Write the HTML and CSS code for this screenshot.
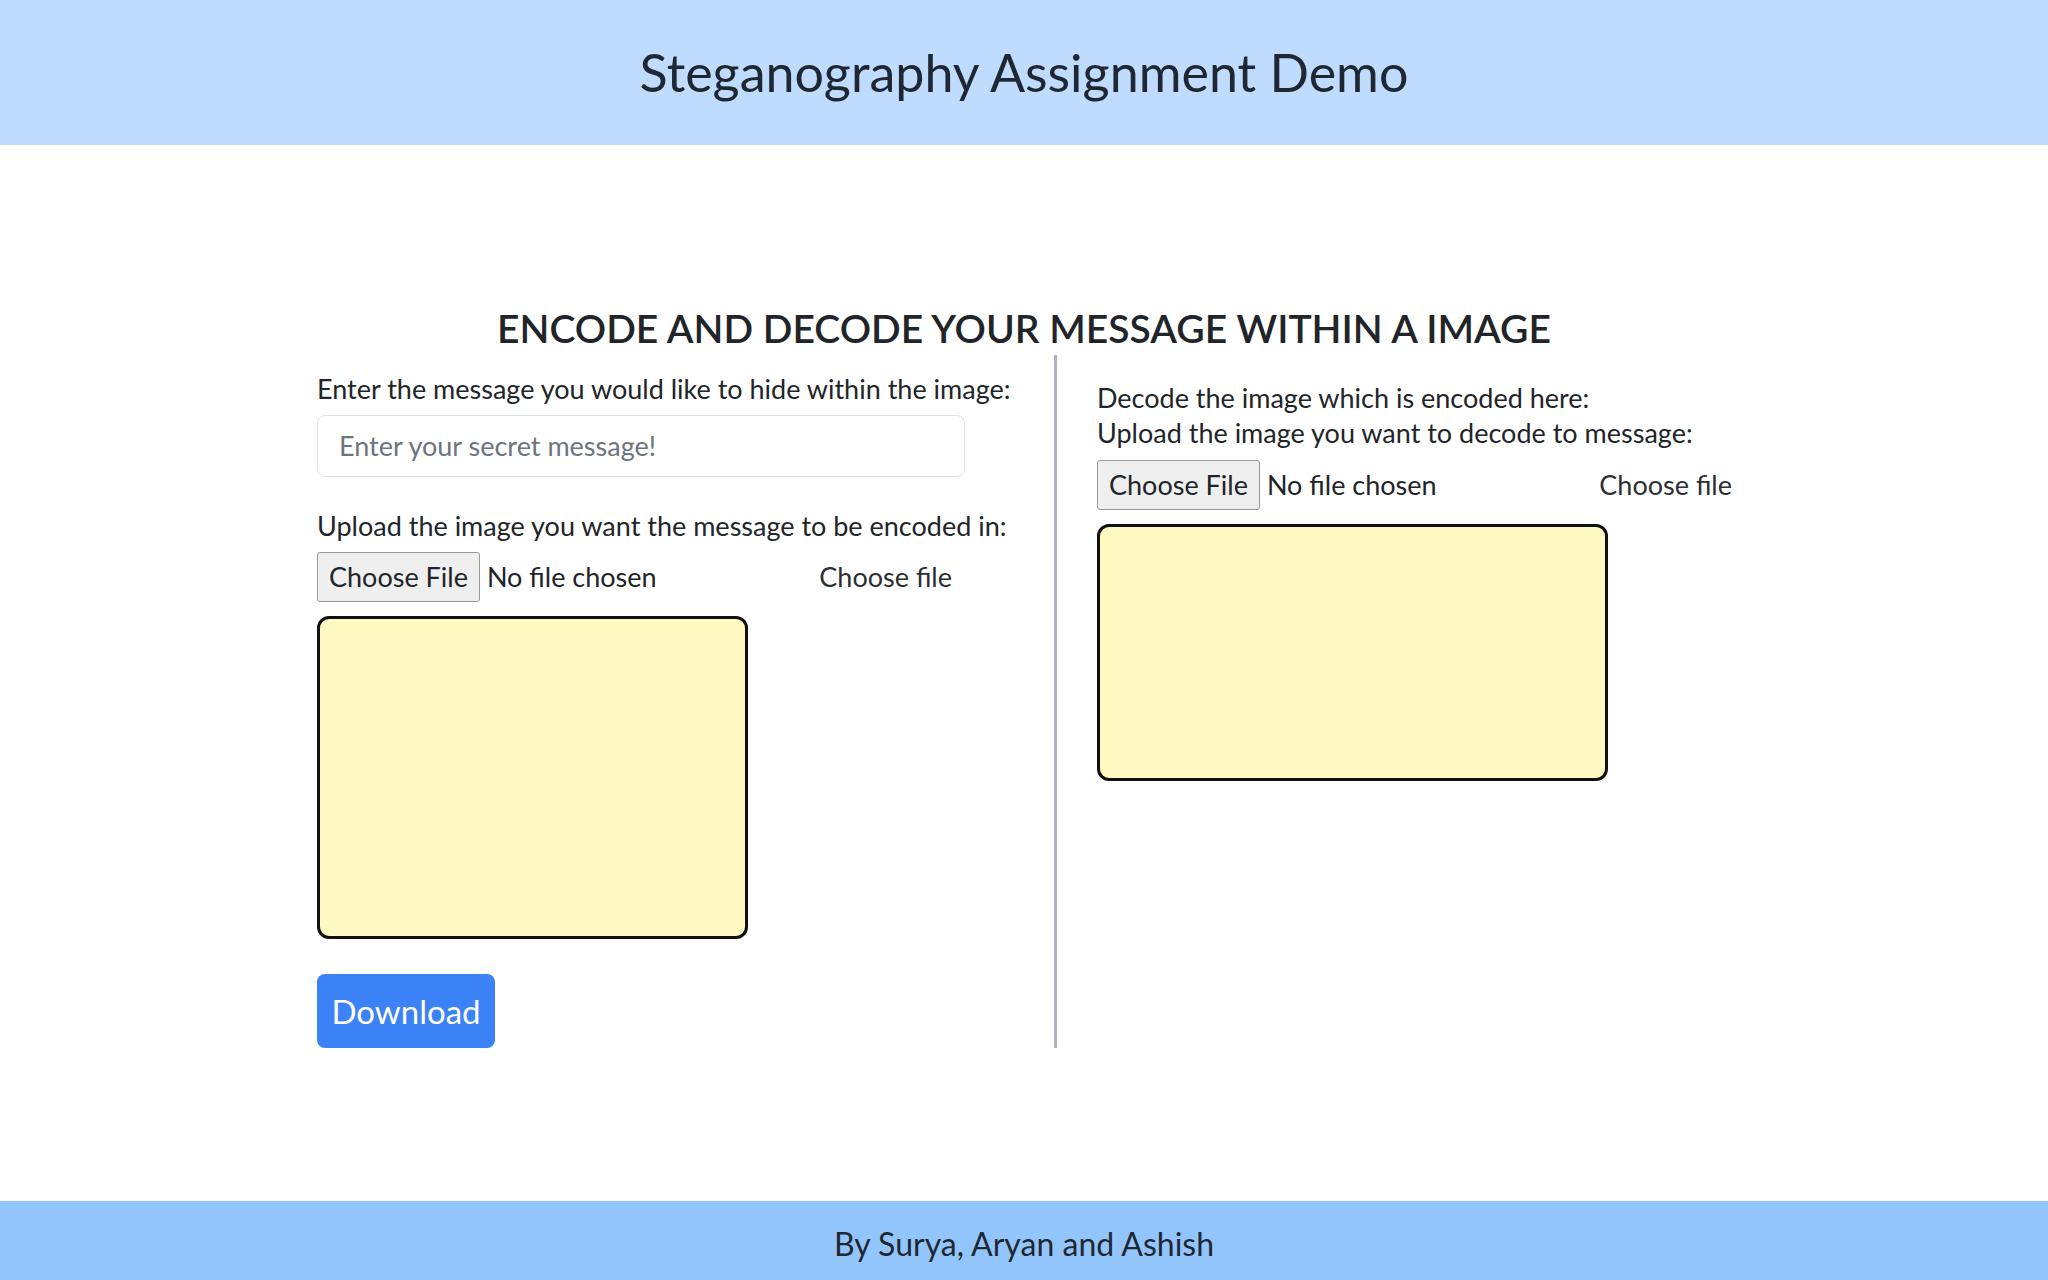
FILE: index.html
```html
<!DOCTYPE html>
<html lang="en">
<head>
    <meta charset="UTF-8">
    <meta name="viewport" content="width=device-width, initial-scale=1.0">
    <title>Steganography Assignment Demo</title>
    <link rel="stylesheet" href="styles.css">
</head>
<body>
    <div class="page">
        <!-- Header -->
        <header class="topbar">
            <h1>Steganography Assignment Demo</h1>
        </header>

        <!-- Main Content -->
        <main class="content">
            <h2 class="heading">ENCODE AND DECODE YOUR MESSAGE WITHIN A IMAGE</h2>

            <div class="panels">
                <!-- Encode -->
                <section class="panel encode">
                    <p class="text">Enter the message you would like to hide within the image:</p>
                    <input type="text" class="msg-input" id="secret" placeholder="Enter your secret message!">

                    <p class="text upload-label">Upload the image you want the message to be encoded in:</p>
                    <div class="file-row">
                        <label class="file-btn" for="encode-file">Choose File</label>
                        <span class="file-name">No file chosen</span>
                        <span class="file-hint">Choose file</span>
                        <input type="file" id="encode-file" class="file-input" accept="image/*">
                    </div>

                    <div class="preview preview-encode"></div>

                    <button class="download-btn">Download</button>
                </section>

                <!-- Decode -->
                <section class="panel decode">
                    <p class="text">Decode the image which is encoded here:</p>
                    <p class="text">Upload the image you want to decode to message:</p>
                    <div class="file-row">
                        <label class="file-btn" for="decode-file">Choose File</label>
                        <span class="file-name">No file chosen</span>
                        <span class="file-hint">Choose file</span>
                        <input type="file" id="decode-file" class="file-input" accept="image/*">
                    </div>

                    <div class="preview preview-decode"></div>
                </section>
            </div>
        </main>

        <!-- Footer -->
        <footer class="footer">
            <p>By Surya, Aryan and Ashish</p>
        </footer>
    </div>
</body>
</html>
```

FILE: styles.css
```css
* {
    margin: 0;
    padding: 0;
    box-sizing: border-box;
}

body {
    font-family: Lato, "Segoe UI", "Open Sans", sans-serif;
    color: #212529;
    background: #fff;
}

.page {
    display: flex;
    flex-direction: column;
    min-height: 100vh;
}

/* Header */
.topbar {
    height: 145px;
    background: #bfdbfe;
    display: flex;
    align-items: center;
    justify-content: center;
}

.topbar h1 {
    font-size: 52px;
    font-weight: 400;
    line-height: 1.2;
    color: #1f2733;
}

/* Main Content */
.content {
    flex: 1;
    width: 1414px;
    margin: 0 auto;
    padding-top: 160px;
}

.heading {
    text-align: center;
    font-size: 39px;
    font-weight: 600;
    line-height: 1.2;
    margin-bottom: 3px;
}

.panels {
    display: flex;
}

.panel {
    display: flex;
    flex-direction: column;
    align-items: flex-start;
}

.encode {
    flex: 0 0 740px;
    padding-top: 16px;
    border-right: 3px solid #aeb2c0;
}

.decode {
    flex: 1;
    min-width: 0;
    padding-top: 25px;
    padding-left: 40px;
}

.text {
    font-size: 27px;
    line-height: 35px;
}

.upload-label {
    margin-top: 31px;
}

.msg-input {
    width: 648px;
    height: 62px;
    margin-top: 9px;
    padding: 0 21px;
    border: 1px solid #dee2e6;
    border-radius: 8px;
    font-family: inherit;
    font-size: 27px;
    color: #212529;
}

.msg-input::placeholder {
    color: #6c757d;
}

/* File picker */
.file-row {
    width: 648px;
    display: flex;
    align-items: center;
    margin-top: 9px;
    font-size: 27px;
}

.decode .file-row {
    margin-top: 10px;
}

.file-btn {
    height: 50px;
    padding: 0 11px;
    display: flex;
    align-items: center;
    background: #efefef;
    border: 1px solid #9a9a9a;
    border-radius: 3px;
    cursor: pointer;
}

.file-name {
    margin-left: 7px;
}

.file-hint {
    margin-left: auto;
    padding-right: 13px;
    color: #2b2f33;
}

.file-input {
    display: none;
}

/* Image previews */
.preview {
    background: #fef9c3;
    border: 3px solid #111;
    border-radius: 12px;
}

.preview-encode {
    width: 431px;
    height: 323px;
    margin-top: 14px;
}

.preview-decode {
    width: 511px;
    height: 257px;
    margin-top: 14px;
}

.download-btn {
    margin-top: 35px;
    width: 178px;
    height: 74px;
    background: #3b82f6;
    color: #fff;
    border: none;
    border-radius: 8px;
    font-family: inherit;
    font-size: 33px;
    cursor: pointer;
}

.download-btn:hover {
    background: #2f74e6;
}

/* Footer */
.footer {
    height: 79px;
    background: #93c5fd;
    display: flex;
    align-items: center;
    justify-content: center;
    padding-top: 6px;
}

.footer p {
    font-size: 32px;
    color: #1f2733;
}
```
